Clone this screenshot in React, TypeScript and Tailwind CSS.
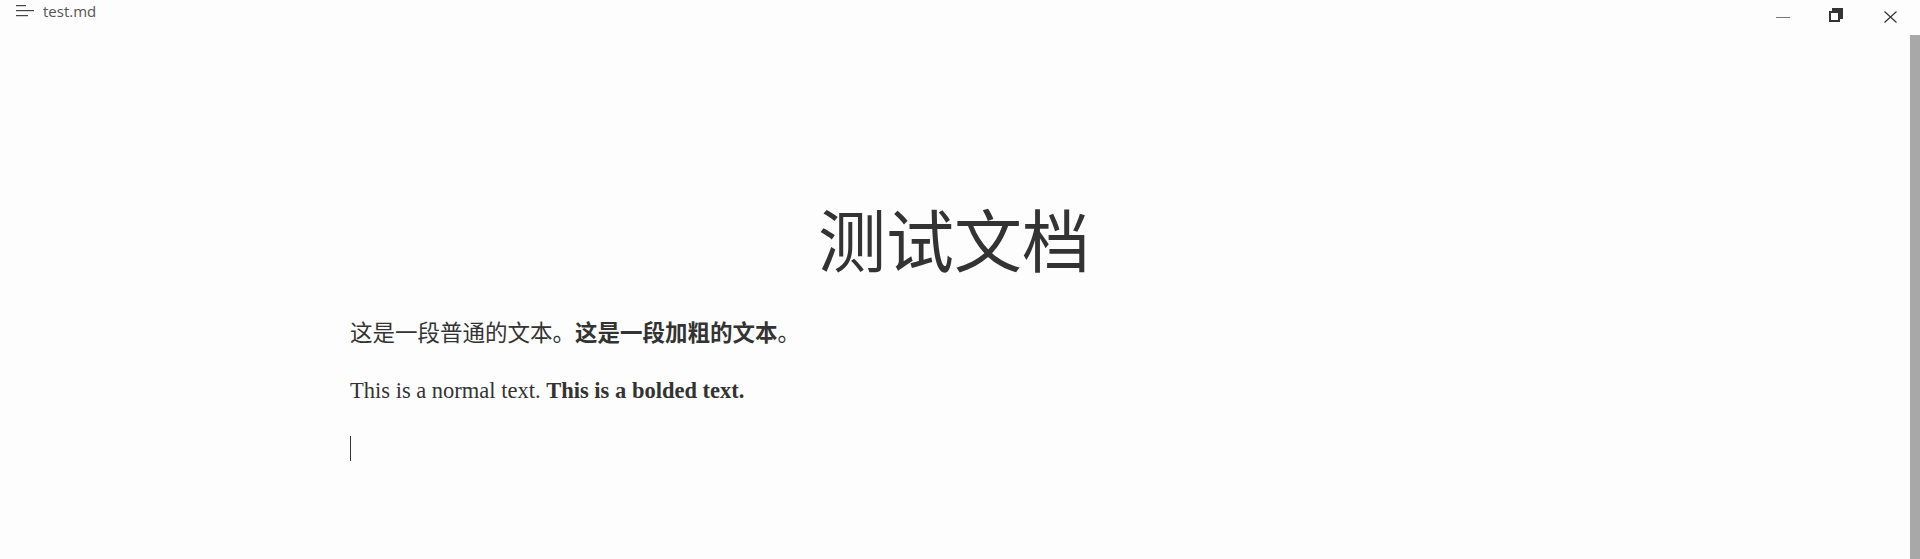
import React from 'react';

const serif = "font-['Liberation_Serif','Noto_Sans_CJK_SC',serif]";

const TitleBar: React.FC = () => (
  <div className="h-[30px] flex items-start justify-between">
    <div className="flex items-center h-[30px] -mt-[4px] pl-[16px]">
      <svg width="19" height="12" viewBox="0 0 19 12" className="text-[#444]">
        <rect x="0" y="0" width="10" height="1.2" fill="currentColor" />
        <rect x="0" y="5" width="18" height="1.2" fill="currentColor" />
        <rect x="0" y="10" width="12" height="1.2" fill="currentColor" />
      </svg>
      <span className="ml-[8px] text-[15px] text-[#555] font-['Open_Sans','Noto_Sans',sans-serif]">test.md</span>
    </div>
    <div className="flex items-start h-[30px] pr-[23px]">
      {/* minimize */}
      <div className="w-[14px] h-[1px] bg-[#777] mt-[17px]" />
      {/* restore */}
      <svg width="14" height="15" viewBox="0 0 14 15" className="ml-[39px] mt-[8px]">
        <rect x="3" y="0" width="11" height="11" fill="#333" />
        <rect x="1" y="4" width="9" height="9" fill="#fff" stroke="#333" strokeWidth="2" />
      </svg>
      {/* close */}
      <svg width="13" height="12" viewBox="0 0 13 12" className="ml-[41px] mt-[11px]">
        <path d="M0.5 0.5 L12.5 11.5 M12.5 0.5 L0.5 11.5" stroke="#333" strokeWidth="1.2" fill="none" />
      </svg>
    </div>
  </div>
);

const App: React.FC = () => {
  return (
    <div className="h-[559px] w-full bg-[#fdfdfd] overflow-hidden flex flex-col text-[#333]">
      <TitleBar />
      <div className="flex flex-1 min-h-0">
        <div className="flex-1 pl-[350px] pr-[352px] pt-[174px]">
          <h1 className={`${serif} text-[68px] leading-[80px] text-center text-[#333] font-normal`}>
            测试文档
          </h1>
          <p className={`${serif} text-[22.5px] leading-[36px] mt-[32px]`}>
            这是一段普通的文本。<strong className="font-bold">这是一段加粗的文本</strong>。
          </p>
          <p className={`${serif} text-[22.5px] leading-[36px] mt-[21px]`}>
            This is a normal text. <strong className="font-bold">This is a bolded text.</strong>
          </p>
          <div className="h-[36px] mt-[21px] flex items-center">
            <div className="w-[1px] h-[25px] bg-[#333]" />
          </div>
        </div>
        <div className="w-[10px] mt-[5px] bg-[#a8a8a8]" />
      </div>
    </div>
  );
};

export default App;
